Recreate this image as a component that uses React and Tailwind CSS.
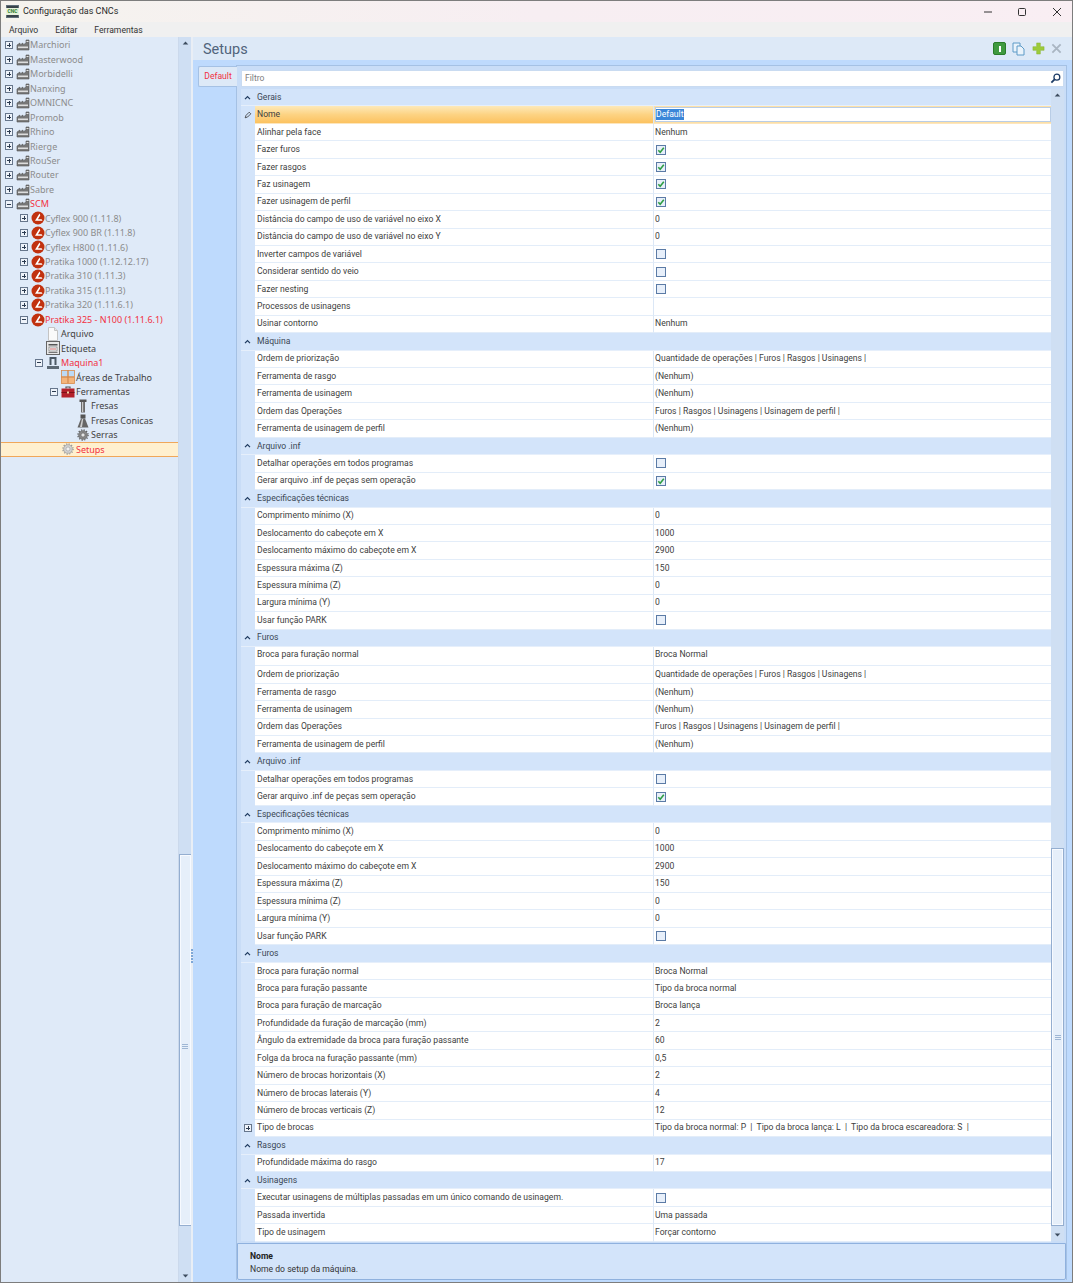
import React from "react";

const Factory = () => (
  <svg viewBox="0 0 14 12" className="w-[14px] h-[12px]">
    <path d="M1 11V6l3-2v2l3-2v2l3-2V1h3v10z" fill="#777" stroke="#555" strokeWidth=".6" />
    <rect x="2" y="7.5" width="10" height="1.6" fill="#ddd" />
    <rect x="10.5" y="2" width="2" height="1" fill="#e5e5e5" />
  </svg>
);
const Scm = () => (
  <svg viewBox="0 0 14 14" className="w-[14px] h-[14px]">
    <circle cx="7" cy="7" r="6.5" fill="#c1310f" />
    <path d="M8.5 2.5 4 9.8h7.5l-.9-1.6H6.900l2.400-4z" fill="#fff" />
  </svg>
);
const Doc = () => (
  <svg viewBox="0 0 14 14" className="w-[14px] h-[14px]">
    <path d="M2.500.5h6l3 3v10h-9z" fill="#fafafa" stroke="#c4c4c4" />
    <path d="M8.500.5v3h3" fill="#e6e6e6" stroke="#c4c4c4" />
  </svg>
);
const Label = () => (
  <svg viewBox="0 0 14 14" className="w-[14px] h-[14px]">
    <rect x=".5" y=".5" width="13" height="13" fill="#e8e8e8" stroke="#666" />
    <rect x="2.500" y="3" width="9" height="1.500" fill="#555" />
    <rect x="3" y="6" width="8" height="4" fill="#fff" stroke="#777" strokeWidth=".7" />
    <rect x="4" y="7.500" width="6" height="1" fill="#c66" />
    <rect x="2.500" y="11" width="9" height="1" fill="#777" />
  </svg>
);
const Machine = () => (
  <svg viewBox="0 0 14 14" className="w-[14px] h-[14px]">
    <path d="M3.500 1h7v8h-2V3h-3v6h-2z" fill="#4d5a66" />
    <rect x="1" y="10" width="12" height="3" fill="#5d6a76" />
  </svg>
);
const Areas = () => (
  <svg viewBox="0 0 14 14" className="w-[14px] h-[14px]">
    <rect x=".5" y=".5" width="6.200" height="6.200" fill="#bcdaf6" stroke="#d98a4a" strokeWidth=".8" />
    <rect x="7.300" y=".5" width="6.200" height="6.200" fill="#bcdaf6" stroke="#d98a4a" strokeWidth=".8" />
    <rect x=".5" y="7.300" width="6.200" height="6.200" fill="#f3b57c" stroke="#d98a4a" strokeWidth=".8" />
    <rect x="7.300" y="7.300" width="6.200" height="6.200" fill="#f3b57c" stroke="#d98a4a" strokeWidth=".8" />
  </svg>
);
const Toolbox = () => (
  <svg viewBox="0 0 14 14" className="w-[14px] h-[14px]">
    <path d="M5 3.500V2h4v1.500" fill="none" stroke="#555" strokeWidth="1.200" />
    <rect x=".5" y="3.500" width="13" height="9" fill="#b3202a" />
    <rect x=".5" y="7" width="13" height="1" fill="#7d1018" />
    <rect x="6" y="6.500" width="2" height="2" fill="#f2d0a0" />
  </svg>
);
const Fresa = () => (
  <svg viewBox="0 0 14 14" className="w-[14px] h-[14px]">
    <rect x="3.500" y=".5" width="7" height="2.500" fill="#555" />
    <path d="M5 3h4v10.500H5z" fill="#6b6b6b" />
    <rect x="6" y="3" width="1.200" height="10" fill="#c9c9c9" />
  </svg>
);
const Conica = () => (
  <svg viewBox="0 0 14 14" className="w-[14px] h-[14px]">
    <rect x="4.500" y=".5" width="5" height="4" fill="#555" />
    <path d="M5 4.500h4l3.500 9h-11z" fill="#666" />
    <path d="M6 5h1.200L6 13H4z" fill="#cfcfcf" />
  </svg>
);
const Gear = ({ light }) => (
  <svg viewBox="0 0 14 14" className="w-[12px] h-[12px]">
    <circle cx="7" cy="7" r="5" fill={light ? "#d4d4d4" : "#8a8a8a"} stroke={light ? "#999" : "#5e5e5e"} strokeWidth=".8" />
    <circle cx="7" cy="7" r="6" fill="none" stroke={light ? "#999" : "#5e5e5e"} strokeWidth="1.400" strokeDasharray="1.500 1.640" />
    <circle cx="7" cy="7" r="2.400" fill={light ? "#f0f0f0" : "#e4e4e4"} stroke={light ? "#999" : "#5e5e5e"} strokeWidth=".7" />
  </svg>
);

const icons = { f: Factory, s: Scm, d: Doc, l: Label, m: Machine, a: Areas, t: Toolbox, r: Fresa, c: Conica, g: Gear };
const lv = ["pl-[4px]", "pl-[19px]", "pl-[34px]", "pl-[49px]", "pl-[64px]"];

const tree = [
  ...["Marchiori", "Masterwood", "Morbidelli", "Nanxing", "OMNICNC", "Promob", "Rhino", "Rierge", "RouSer", "Router", "Sabre"].map((t) => [0, "+", "f", t, "g"]),
  [0, "-", "f", "SCM", "r"],
  ...["Cyflex 900 (1.11.8)", "Cyflex 900 BR (1.11.8)", "Cyflex H800 (1.11.6)", "Pratika 1000 (1.12.12.17)", "Pratika 310 (1.11.3)", "Pratika 315 (1.11.3)", "Pratika 320 (1.11.6.1)"].map((t) => [1, "+", "s", t, "g"]),
  [1, "-", "s", "Pratika 325 - N100 (1.11.6.1)", "r"],
  [2, "", "d", "Arquivo", "k"],
  [2, "", "l", "Etiqueta", "k"],
  [2, "-", "m", "Maquina1", "r"],
  [3, "", "a", "Áreas de Trabalho", "k"],
  [3, "-", "t", "Ferramentas", "k"],
  [4, "", "r", "Fresas", "k"],
  [4, "", "c", "Fresas Conicas", "k"],
  [4, "", "g", "Serras", "k"],
];

const Expander = ({ v }) => (
  <span className={"relative w-[8px] h-[8px] shrink-0 " + (v ? "border border-[#66768c] bg-[#eef3fa]" : "")}>
    {v && <span className="absolute left-[1px] top-[2.5px] w-[4px] h-px bg-[#2c3b50]" />}
    {v === "+" && <span className="absolute left-[2.5px] top-[1px] w-px h-[4px] bg-[#2c3b50]" />}
  </span>
);

const TreeRow = ({ row }) => {
  const [level, exp, ic, text, col] = row;
  const I = icons[ic];
  const color = col === "g" ? "text-[#8c8c8c]" : col === "r" ? "text-[#f2303f]" : "text-[#3f3f3f]";
  return (
    <div className={"h-[14.45px] flex items-center whitespace-nowrap " + lv[level]}>
      <Expander v={exp} />
      <span className="ml-[3px] w-[14px] h-[14px] shrink-0 flex items-center justify-center"><I /></span>
      <span className={(level < 2 ? "" : "ml-px ") + color}>{text}</span>
    </div>
  );
};

const ChevUp = () => (
  <svg viewBox="0 0 8 6" className="w-[7px] h-[5px]"><path d="M1 5l3-3 3 3" fill="none" stroke="#1e3a5f" strokeWidth="1.500" /></svg>
);

const Check = ({ on }) => (
  <span className="w-[10px] h-[10px] border border-[#5b7ba6] bg-[#e7effa] flex items-center justify-center shrink-0">
    {on && (
      <svg viewBox="0 0 8 8" className="w-[8px] h-[8px]"><path d="M1.300 4.200 3.200 6.200 6.800 1.800" fill="none" stroke="#2f9e44" strokeWidth="1.600" /></svg>
    )}
  </span>
);

const S = (t) => ({ s: t });
const R = (n, v, x = {}) => ({ n, v, ...x });
const C = (n, on) => ({ n, c: true, on });

const PRIOR = "Quantidade de operações | Furos | Rasgos | Usinagens |";
const OPER = "Furos | Rasgos | Usinagens | Usinagem de perfil |";
const NH = "(Nenhum)";
const arq = [S("Arquivo .inf"), C("Detalhar operações em todos programas", false), C("Gerar arquivo .inf de peças sem operação", true)];
const esp = [
  S("Especificações técnicas"),
  R("Comprimento mínimo (X)", "0"),
  R("Deslocamento do cabeçote em X", "1000"),
  R("Deslocamento máximo do cabeçote em X", "2900"),
  R("Espessura máxima (Z)", "150"),
  R("Espessura mínima (Z)", "0"),
  R("Largura mínima (Y)", "0"),
  C("Usar função PARK", false),
];
const rows = [
  S("Gerais"),
  { n: "Nome", v: "Default", active: true },
  R("Alinhar pela face", "Nenhum"),
  C("Fazer furos", true),
  C("Fazer rasgos", true),
  C("Faz usinagem", true),
  C("Fazer usinagem de perfil", true),
  R("Distância do campo de uso de variável no eixo X", "0"),
  R("Distância do campo de uso de variável no eixo Y", "0"),
  C("Inverter campos de variável", false),
  C("Considerar sentido do veio", false),
  C("Fazer nesting", false),
  R("Processos de usinagens", ""),
  R("Usinar contorno", "Nenhum"),
  S("Máquina"),
  R("Ordem de priorização", PRIOR),
  R("Ferramenta de rasgo", NH),
  R("Ferramenta de usinagem", NH),
  R("Ordem das Operações", OPER),
  R("Ferramenta de usinagem de perfil", NH),
  ...arq,
  ...esp,
  S("Furos"),
  R("Broca para furação normal", "Broca Normal", { tall: true }),
  R("Ordem de priorização", PRIOR),
  R("Ferramenta de rasgo", NH),
  R("Ferramenta de usinagem", NH),
  R("Ordem das Operações", OPER),
  R("Ferramenta de usinagem de perfil", NH),
  ...arq,
  ...esp,
  S("Furos"),
  R("Broca para furação normal", "Broca Normal"),
  R("Broca para furação passante", "Tipo da broca normal"),
  R("Broca para furação de marcação", "Broca lança"),
  R("Profundidade da furação de marcação (mm)", "2"),
  R("Ângulo da extremidade da broca para furação passante", "60"),
  R("Folga da broca na furação passante (mm)", "0,5"),
  R("Número de brocas horizontais (X)", "2"),
  R("Número de brocas laterais (Y)", "4"),
  R("Número de brocas verticais (Z)", "12"),
  R("Tipo de brocas", "Tipo da broca normal: P  |  Tipo da broca lança: L  |  Tipo da broca escareadora: S  |", { exp: true }),
  S("Rasgos"),
  R("Profundidade máxima do rasgo", "17"),
  S("Usinagens"),
  C("Executar usinagens de múltiplas passadas em um único comando de usinagem.", false),
  R("Passada invertida", "Uma passada"),
  R("Tipo de usinagem", "Forçar contorno"),
];

const GridRow = ({ r }) => {
  if (r.s)
    return (
      <div className="h-[17.44px] flex items-center bg-[#d3e4fa] border-b border-b-[#e6effb]">
        <span className="ml-[3px] w-[7px] flex justify-center shrink-0"><ChevUp /></span>
        <span className="ml-[6px] text-[#3a4654]">{r.s}</span>
      </div>
    );
  return (
    <div className={"flex " + (r.tall ? "h-[19.3px]" : "h-[17.44px]")}>
      <span className="w-[14px] shrink-0 flex items-center justify-center">
        {r.active && (
          <svg viewBox="0 0 10 10" className="w-[8px] h-[8px]"><path d="M1.500 8.500l1-3 4-4 2 2-4 4z" fill="none" stroke="#333" strokeWidth="1" /></svg>
        )}
        {r.exp && <Expander v="+" />}
      </span>
      <div
        className={
          "w-[398px] shrink-0 flex pl-[2px] border-b " +
          (r.active
            ? "bg-gradient-to-b from-[#fde9b8] via-[#fdd383] to-[#fcc25f] border-b-[#fde6bd]"
            : "bg-white border-b-[#e3edf9]") +
          (r.tall ? " items-start pt-px" : " items-center")
        }
      >
        <span className="text-[#404040] whitespace-nowrap">{r.n}</span>
      </div>
      <div
        className={
          "flex-1 min-w-0 flex pl-px border-l whitespace-pre border-l-[#dbe7f6] border-b " +
          (r.active ? "items-center bg-[#fde0a6] border-b-[#fde6bd] py-px" : "bg-white border-b-[#e3edf9] ") +
          (r.tall ? " items-start pt-px" : " items-center")
        }
      >
        {r.active ? (
          <span className="flex-1 h-full bg-white border border-[#b9cde6] flex items-center">
            <span className="bg-[#3a86d8] text-white leading-[11px]">Default</span>
          </span>
        ) : r.c ? (
          <span className="ml-px"><Check on={r.on} /></span>
        ) : (
          <span className="text-[#404040]">{r.v}</span>
        )}
      </div>
    </div>
  );
};

const Arrow = ({ up }) => (
  <svg viewBox="0 0 8 5" className="w-[7px] h-[4px]"><path d={up ? "M4 .5 7.500 4.500H.5z" : "M4 4.500 .5.5h7z"} fill="#3d4c5f" /></svg>
);

const Grip = () => (
  <span className="flex flex-col gap-px">
    <span className="w-[6px] h-px bg-[#9eb6d4]" />
    <span className="w-[6px] h-px bg-[#9eb6d4]" />
    <span className="w-[6px] h-px bg-[#9eb6d4]" />
  </span>
);

const ScrollBar = ({ spacer, thumb, className }) => (
  <div className={"flex flex-col items-center shrink-0 bg-[#cfdff3] " + className}>
    <div className="h-[12px] flex items-center justify-center shrink-0"><Arrow up /></div>
    <div className={"shrink-0 " + spacer} />
    <div className={"w-[13px] flex items-center justify-center bg-[#e6effa] border border-[#94aed0] shadow-[inset_0_0_0_1px_#f7faff] " + thumb}>
      <Grip />
    </div>
    <div className="flex-1" />
    <div className="h-[12px] flex items-center justify-center shrink-0"><Arrow /></div>
  </div>
);

export default function App() {
  return (
    <div className="w-[1073px] h-[1283px] overflow-hidden flex flex-col border border-[#7d7d7d] text-[8.600px] bg-[#f0f0f0] [font-family:'Roboto','Noto_Sans',sans-serif] text-[#3f3f3f]">
      <header className="h-[21px] shrink-0 flex items-center bg-gradient-to-r from-[#f5f3ee] via-[#f7eef2] to-[#f9eef3]">
        <span className="ml-[5px] w-[13px] h-[13px] bg-[#38424a] border border-[#60707a] flex items-center justify-center">
          <span className="bg-[#e6f3dc] text-[#2b7a2b] text-[5px] leading-[7px] font-bold px-px">CNC</span>
        </span>
        <span className="ml-[4px] text-[9px] text-[#2a2a2a]">Configuração das CNCs</span>
        <div className="ml-auto flex items-center">
          <svg viewBox="0 0 10 10" className="w-[10px] h-[10px]"><path d="M1 5h8" stroke="#333" strokeWidth="1" /></svg>
          <svg viewBox="0 0 10 10" className="w-[10px] h-[10px] ml-[24px]"><rect x="1.500" y="1.500" width="7" height="7" rx="1" fill="none" stroke="#333" strokeWidth="1" /></svg>
          <svg viewBox="0 0 10 10" className="w-[10px] h-[10px] ml-[25px] mr-[10px]"><path d="M1 1l8 8M9 1l-8 8" stroke="#333" strokeWidth="1" /></svg>
        </div>
      </header>
      <nav className="h-[15px] shrink-0 flex items-center bg-[#f0f0f0] text-[#333] pl-[8px] pt-px gap-[17px]">
        <span>Arquivo</span>
        <span>Editar</span>
        <span>Ferramentas</span>
      </nav>
      <main className="flex-1 min-h-0 flex bg-[#bedafd]">
        <section className="w-[177px] shrink-0 bg-[#dfeaf8] text-[9px] [font-family:'Noto_Sans',sans-serif]">
          <div className="mt-px">
            {tree.map((r, i) => <TreeRow key={i} row={r} />)}
          </div>
          <div className="h-[14.45px] flex items-center pl-[49px] border-y border-y-[#f0a75a] bg-[#fff0cf] whitespace-nowrap">
            <span className="w-[8px] shrink-0" />
            <span className="ml-[3px] w-[14px] h-[14px] flex items-center justify-center"><Gear light /></span>
            <span className="ml-px text-[#f2303f]">Setups</span>
          </div>
        </section>
        <ScrollBar className="w-[13px] border-l border-l-[#cbd9ec]" spacer="h-[805px]" thumb="h-[372px] pt-[12px]" />
        <div className="w-[2px] shrink-0 bg-[#e9eef5] relative">
          <span className="absolute left-0 top-[912px] flex flex-col gap-px">
            {[0, 1, 2, 3, 4].map((i) => <span key={i} className="w-[2px] h-[2px] bg-[#7fa7d6]" />)}
          </span>
        </div>
        <div className="flex-1 min-w-0 flex flex-col">
          <div className="h-[23px] shrink-0 bg-[#dde9f7] flex items-center pl-[10px]">
            <span className="text-[14.500px] leading-none text-[#51647c] pt-[3px]">Setups</span>
            <div className="ml-auto flex items-center gap-[6px] mr-[10px]">
              <span className="w-[13px] h-[13px] rounded-[2px] bg-[#3f9a3f] border border-[#2a7c2a] flex items-center justify-center">
                <span className="w-[2px] h-[6px] bg-white" />
              </span>
              <svg viewBox="0 0 14 14" className="w-[14px] h-[14px]">
                <path d="M1 1h7v9H1z" fill="#eaf3fb" stroke="#5c9ac7" />
                <path d="M5 4h4l3 3v6H5z" fill="#eaf3fb" stroke="#5c9ac7" />
              </svg>
              <svg viewBox="0 0 14 14" className="w-[13px] h-[13px]">
                <path d="M5 1h4v4h4v4H9v4H5V9H1V5h4z" fill="#9ccb3b" stroke="#84b02c" strokeWidth=".5" />
              </svg>
              <svg viewBox="0 0 12 12" className="w-[11px] h-[11px]"><path d="M1.500 1.500l9 9M10.500 1.500l-9 9" stroke="#a9b5c2" strokeWidth="2" /></svg>
            </div>
          </div>
          <div className="flex-1 min-h-0 flex pl-[5px] pt-[5px] pb-[2px] pr-[5px]">
            <div className="w-[39px] h-[21px] mt-px -mr-px shrink-0 bg-[#dde9f7] border border-[#a5c1e4] border-r-0 rounded-l-[2px] flex items-center justify-center text-[#f2303f] relative">
              Default
            </div>
            <div className="flex-1 min-w-0 flex flex-col border border-[#a5c1e4] border-b-0 bg-[#c9ddf7] pt-[4px] pl-[4px] pr-[2px]">
              <div className="h-[17px] shrink-0 bg-white flex items-center pl-[3px] pr-[2px] border border-[#c9dbf1] text-[#808080]">
                Filtro
                <svg viewBox="0 0 12 12" className="ml-auto w-[11px] h-[11px]">
                  <circle cx="7.500" cy="4.500" r="3.200" fill="none" stroke="#1d3c66" strokeWidth="1.400" />
                  <path d="M5 7 1.500 10.500" stroke="#1d3c66" strokeWidth="2" />
                </svg>
              </div>
              <div className="h-[1151.800px] mt-[2px] shrink-0 flex bg-[#d3e4fa]">
                <div className="flex-1 min-w-0">
                  {rows.map((r, i) => <GridRow key={i} r={r} />)}
                </div>
                <ScrollBar className="w-[13px] h-full" spacer="h-[747px]" thumb="h-[378px]" />
              </div>
              <div className="flex-1 min-h-0 mt-[2px] -ml-[4px] -mr-[2px] bg-[#d3e4fa] border border-[#8fb1de] rounded-b-[2px] px-[12px] pt-[6px] text-[#333]">
                <div className="font-bold leading-[13px] text-[#222]">Nome</div>
                <div className="leading-[13px]">Nome do setup da máquina.</div>
              </div>
            </div>
          </div>
        </div>
      </main>
    </div>
  );
}
